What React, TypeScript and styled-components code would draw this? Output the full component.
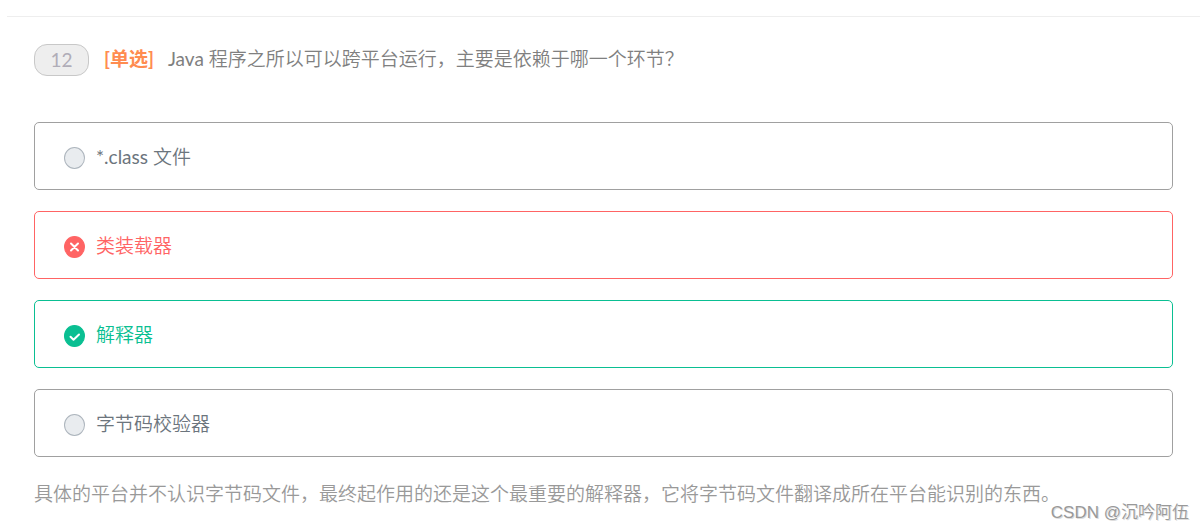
import React from "react";
import styled, { createGlobalStyle } from "styled-components";

const GlobalStyle = createGlobalStyle`
  *, *::before, *::after { box-sizing: border-box; }
  body {
    margin: 0;
    background: #fff;
    font-family: Lato, "Noto Sans CJK SC", sans-serif;
    font-size: 19px;
    line-height: 28px;
    font-weight: 350;
  }
`;

type Status = "idle" | "wrong" | "right";

const border: Record<Status, string> = { idle: "#a0a0a0", wrong: "#ff6464", right: "#0abf92" };
const ink: Record<Status, string> = { idle: "#6c757d", wrong: "#ff6464", right: "#0abf92" };

const Page = styled.main`
  position: relative;
  padding: 16px 4px 0 7px;
`;

const Question = styled.section`
  border-top: 1px solid #eee;
  padding: 27px 27px 21px;
`;

const Header = styled.header`
  display: flex;
  align-items: center;
  height: 32px;
  margin-bottom: 46px;
`;

const NumberBadge = styled.span`
  display: flex;
  align-items: center;
  justify-content: center;
  width: 55px;
  height: 32px;
  border: 1px solid #c8c8c8;
  border-radius: 13px;
  background: #eee;
  color: #b0adb8;
  font-weight: 400;
`;

const Kind = styled.strong`
  margin: 0 14px 2px 15px;
  color: #ff8c50;
  font-weight: 700;
`;

const Title = styled.h1`
  margin: 0 0 2px;
  color: #808080;
  font-size: 19px;
  line-height: 28px;
  font-weight: 350;
`;

const Latin = styled.span`
  font-weight: 400;
`;

const Options = styled.fieldset`
  display: grid;
  gap: 21px;
  min-width: 0;
  margin: 0;
  padding: 0;
  border: 0;
`;

const Option = styled.label<{ $status: Status }>`
  display: flex;
  align-items: center;
  gap: 11px;
  height: 68px;
  padding: 0 29px;
  border: 1px solid ${(p) => border[p.$status]};
  border-radius: 5px;
  color: ${(p) => ink[p.$status]};
`;

const OptionText = styled.span`
  padding-top: 2px;
`;

const Mark = styled.span`
  position: relative;
  display: flex;
  margin-top: 4px;
`;

const Radio = styled.input<{ $status: Status }>`
  appearance: none;
  width: 21px;
  height: 22px;
  margin: 0;
  border: 1px solid ${(p) => (p.$status === "idle" ? "#adb5bd" : border[p.$status])};
  border-radius: 50%;
  background: ${(p) => (p.$status === "idle" ? "#e9ecef" : border[p.$status])};
`;

const Glyph = styled.svg`
  position: absolute;
  inset: 0;
  fill: none;
  stroke: #fff;
  stroke-width: 2;
  stroke-linecap: round;
  stroke-linejoin: round;
`;

const Explanation = styled.p`
  margin: 23px 0 0;
  color: #999;
`;

const Watermark = styled.small`
  position: absolute;
  right: 15px;
  bottom: 4px;
  color: #999;
  font-family: "Liberation Sans", "Noto Sans CJK SC", sans-serif;
  font-size: 17px;
  line-height: 24px;
  text-shadow: 1px 1px 0 #ddd;
`;

const options: { latin?: string; text: string; status: Status }[] = [
  { latin: "*.class ", text: "文件", status: "idle" },
  { text: "类装载器", status: "wrong" },
  { text: "解释器", status: "right" },
  { text: "字节码校验器", status: "idle" },
];

export default function App() {
  return (
    <>
      <GlobalStyle />
      <Page>
        <Question>
          <Header>
            <NumberBadge>12</NumberBadge>
            <Kind>[单选]</Kind>
            <Title id="question">
              <Latin>Java </Latin>程序之所以可以跨平台运行，主要是依赖于哪一个环节？
            </Title>
          </Header>
          <Options aria-labelledby="question">
            {options.map(({ latin, text, status }, i) => (
              <Option key={text} $status={status} htmlFor={`option-${i}`}>
                <Mark>
                  <Radio
                    type="radio"
                    id={`option-${i}`}
                    name="answer"
                    $status={status}
                    defaultChecked={status === "wrong"}
                    disabled
                  />
                  {status !== "idle" && (
                    <Glyph width="21" height="22" viewBox="0 0 21 22" aria-hidden="true">
                      <path d={status === "wrong" ? "M7 7.5l7 7M14 7.5l-7 7" : "M6.5 11.8l3 3 5.5-5.3"} />
                    </Glyph>
                  )}
                </Mark>
                <OptionText>
                  {latin && <Latin>{latin}</Latin>}
                  {text}
                </OptionText>
              </Option>
            ))}
          </Options>
          <Explanation>
            具体的平台并不认识字节码文件，最终起作用的还是这个最重要的解释器，它将字节码文件翻译成所在平台能识别的东西。
          </Explanation>
        </Question>
        <Watermark>CSDN @沉吟阿伍</Watermark>
      </Page>
    </>
  );
}
